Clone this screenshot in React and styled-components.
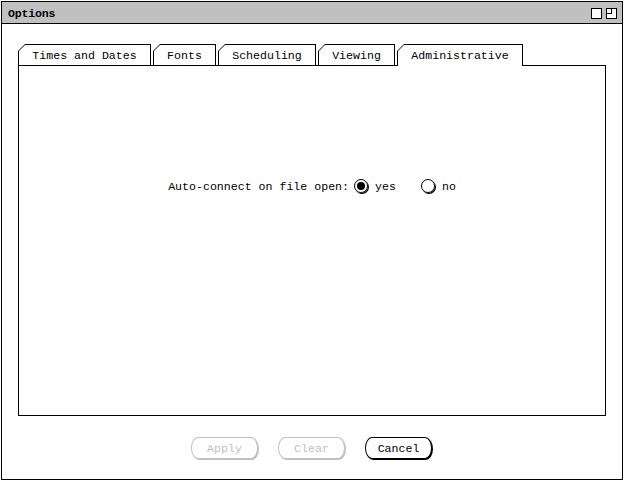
import React, { useState } from 'react';
import styled, { createGlobalStyle } from 'styled-components';

const GlobalStyle = createGlobalStyle`
  html, body {
    margin: 0;
    padding: 0;
    background: #fff;
  }
  body {
    font-family: "Liberation Mono", "DejaVu Sans Mono", monospace;
    font-size: 11.6px;
    color: #000;
  }
`;

const Window = styled.div`
  box-sizing: border-box;
  width: 622px;
  height: 479px;
  margin: 1px 0 0 1px;
  border: 1px solid #000;
  display: flex;
  flex-direction: column;
  background: #fff;
`;

const TitleBar = styled.div`
  box-sizing: border-box;
  height: 22px;
  flex: none;
  background: #c0c0c0;
  border-bottom: 1px solid #000;
  padding: 1px 5px 0 6px;
  display: flex;
  align-items: center;
  justify-content: space-between;
`;

const Title = styled.span`
  font-weight: bold;
  font-size: 11.6px;
  letter-spacing: -0.2px;
`;

const TitleButtons = styled.div`
  display: flex;
  gap: 4px;
`;

const TitleButton = styled.div`
  box-sizing: border-box;
  width: 11px;
  height: 11px;
  border: 1px solid #000;
  background: #fff;
  position: relative;

  ${props =>
    props.restore &&
    `
    &::after {
      content: '';
      position: absolute;
      left: -1px;
      top: -1px;
      width: 5px;
      height: 5px;
      border-right: 1px solid #000;
      border-bottom: 1px solid #000;
    }
  `}
`;

const Body = styled.div`
  flex: 1;
  padding: 20px 16px 0;
  display: flex;
  flex-direction: column;
`;

const TabRow = styled.div`
  display: flex;
  align-items: flex-end;
  gap: 2px;
  height: 21px;
  position: relative;
  z-index: 1;
`;

const TabOuter = styled.div`
  width: ${props => props.width}px;
  height: ${props => (props.active ? 22 : 21)}px;
  margin-bottom: ${props => (props.active ? -1 : 0)}px;
  background: #000;
  padding: 1px 1px 0 1px;
  box-sizing: border-box;
  clip-path: polygon(0 7px, 7px 0, 100% 0, 100% 100%, 0 100%);
  cursor: pointer;
`;

const TabInner = styled.div`
  height: 100%;
  background: #fff;
  clip-path: polygon(0 6px, 6px 0, 100% 0, 100% 100%, 0 100%);
  display: flex;
  align-items: center;
  justify-content: center;
  padding-top: ${props => (props.active ? 0 : 1)}px;
  box-sizing: border-box;
  white-space: nowrap;
`;

const Panel = styled.div`
  box-sizing: border-box;
  height: 351px;
  border: 1px solid #000;
  padding-top: 112px;
  display: flex;
  justify-content: center;
`;

const FieldRow = styled.div`
  display: flex;
  align-items: center;
  height: 16px;
`;

const Label = styled.span`
  margin-right: 5px;
`;

const RadioOption = styled.label`
  display: flex;
  align-items: center;
  margin-right: ${props => props.spacing}px;
  cursor: pointer;
`;

const RadioCircle = styled.span`
  box-sizing: border-box;
  width: 14px;
  height: 14px;
  border-radius: 50%;
  border: 1px solid #000;
  box-shadow: 1px 1px 0 #000;
  display: flex;
  align-items: center;
  justify-content: center;
  margin-right: 7px;

  &::after {
    content: '';
    width: 8px;
    height: 8px;
    border-radius: 50%;
    background: ${props => (props.checked ? '#000' : 'transparent')};
  }
`;

const ButtonBar = styled.div`
  display: flex;
  justify-content: center;
  gap: 20px;
  margin-top: 21px;
  padding-right: 1px;
`;

const Button = styled.button`
  box-sizing: border-box;
  width: 67px;
  height: 22px;
  padding: 0;
  background: #fff;
  font-family: inherit;
  font-size: 11.6px;
  color: ${props => (props.disabled ? '#c0c0c0' : '#000')};
  border: 1px solid ${props => (props.disabled ? '#c0c0c0' : '#000')};
  border-radius: 7px / 11px;
  box-shadow: 1px 1px 0 ${props => (props.disabled ? '#c0c0c0' : '#000')};
  cursor: ${props => (props.disabled ? 'default' : 'pointer')};
`;

const tabs = [
  { label: 'Times and Dates', width: 133 },
  { label: 'Fonts', width: 63 },
  { label: 'Scheduling', width: 98 },
  { label: 'Viewing', width: 77 },
  { label: 'Administrative', width: 126 }
];

export default function App() {
  const [activeTab, setActiveTab] = useState('Administrative');
  const [autoConnect, setAutoConnect] = useState(true);

  return (
    <>
      <GlobalStyle />
      <Window>
        <TitleBar>
          <Title>Options</Title>
          <TitleButtons>
            <TitleButton />
            <TitleButton restore />
          </TitleButtons>
        </TitleBar>
        <Body>
          <TabRow>
            {tabs.map(tab => {
              const active = tab.label === activeTab;
              return (
                <TabOuter
                  key={tab.label}
                  width={tab.width}
                  active={active}
                  onClick={() => setActiveTab(tab.label)}
                >
                  <TabInner active={active}>{tab.label}</TabInner>
                </TabOuter>
              );
            })}
          </TabRow>
          <Panel>
            <FieldRow>
              <Label>Auto-connect on file open:</Label>
              <RadioOption spacing={25} onClick={() => setAutoConnect(true)}>
                <RadioCircle checked={autoConnect} />
                yes
              </RadioOption>
              <RadioOption spacing={0} onClick={() => setAutoConnect(false)}>
                <RadioCircle checked={!autoConnect} />
                no
              </RadioOption>
            </FieldRow>
          </Panel>
          <ButtonBar>
            <Button disabled>Apply</Button>
            <Button disabled>Clear</Button>
            <Button>Cancel</Button>
          </ButtonBar>
        </Body>
      </Window>
    </>
  );
}
